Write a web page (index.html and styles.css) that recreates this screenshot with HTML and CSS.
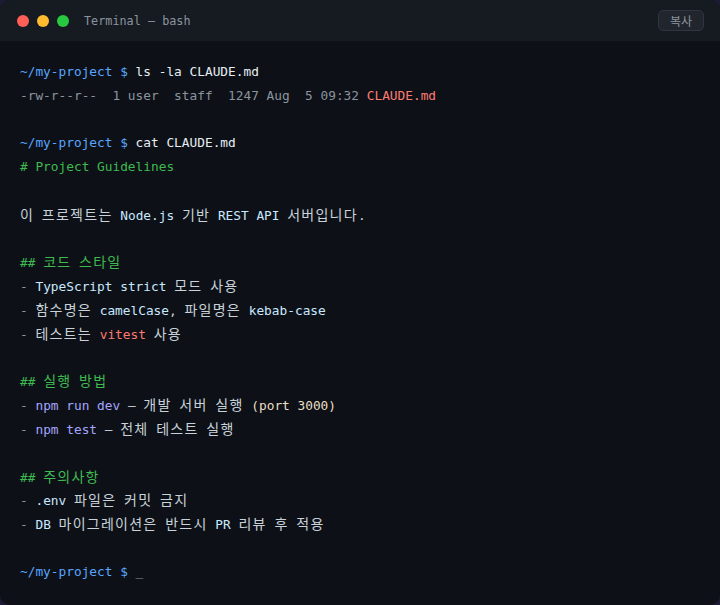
FILE: index.html
```html
<!DOCTYPE html>
<html lang="ko">
<head>
<meta charset="utf-8">
<title>Terminal</title>
<link rel="stylesheet" href="styles.css">
</head>
<body>
<div class="window">
  <div class="titlebar">
    <div class="dots">
      <span class="dot red"></span>
      <span class="dot yellow"></span>
      <span class="dot green"></span>
    </div>
    <div class="title">Terminal — bash</div>
    <button class="copy">복사</button>
  </div>
  <div class="term">
    <div class="line"><span class="prompt">~/my-project $</span> <span class="cmd">ls -la CLAUDE.md</span></div>
    <div class="line"><span class="muted">-rw-r--r--  1 user  staff  1247 Aug  5 09:32</span> <span class="red">CLAUDE.md</span></div>
    <div class="line"></div>
    <div class="line"><span class="prompt">~/my-project $</span> <span class="cmd">cat CLAUDE.md</span></div>
    <div class="line"><span class="green"># Project Guidelines</span></div>
    <div class="line"></div>
    <div class="line"><span class="k">이</span> <span class="k">프로젝트는</span> <span class="code">Node.js</span> <span class="k">기반</span> <span class="code">REST API</span> <span class="k">서버입니다</span>.</div>
    <div class="line"></div>
    <div class="line"><span class="green">## <span class="k">코드</span> <span class="k">스타일</span></span></div>
    <div class="line"><span class="dash">-</span> <span class="code">TypeScript strict</span> <span class="k">모드</span> <span class="k">사용</span></div>
    <div class="line"><span class="dash">-</span> <span class="k">함수명은</span> <span class="code">camelCase</span>, <span class="k">파일명은</span> <span class="code">kebab-case</span></div>
    <div class="line"><span class="dash">-</span> <span class="k">테스트는</span> <span class="red">vitest</span> <span class="k">사용</span></div>
    <div class="line"></div>
    <div class="line"><span class="green">## <span class="k">실행</span> <span class="k">방법</span></span></div>
    <div class="line"><span class="dash">-</span> <span class="npm">npm run dev</span> — <span class="k">개발</span> <span class="k">서버</span> <span class="k">실행</span> <span class="paren">(port 3000)</span></div>
    <div class="line"><span class="dash">-</span> <span class="npm">npm test</span> — <span class="k">전체</span> <span class="k">테스트</span> <span class="k">실행</span></div>
    <div class="line"></div>
    <div class="line"><span class="green">## <span class="k">주의사항</span></span></div>
    <div class="line"><span class="dash">-</span> <span class="code">.env</span> <span class="k">파일은</span> <span class="k">커밋</span> <span class="k">금지</span></div>
    <div class="line"><span class="dash">-</span> <span class="code">DB</span> <span class="k">마이그레이션은</span> <span class="k">반드시</span> <span class="code">PR</span> <span class="k">리뷰</span> <span class="k">후</span> <span class="k">적용</span></div>
    <div class="line"></div>
    <div class="line"><span class="prompt">~/my-project $</span> <span class="cursor">_</span></div>
  </div>
</div>
</body>
</html>
```

FILE: styles.css
```css
* { box-sizing: border-box; }
html, body {
  margin: 0;
  padding: 0;
  background: #1d1a36;
}
.window {
  width: 720px;
  height: 605px;
  border-radius: 10px;
  overflow: hidden;
  background: #0d1117;
  display: flex;
  flex-direction: column;
}
.titlebar {
  height: 42px;
  background: #161b22;
  border-bottom: 1px solid #0f1319;
  display: flex;
  align-items: center;
  padding: 0 16px 0 17px;
}
.dots {
  display: flex;
  gap: 8px;
}
.dot {
  width: 12px;
  height: 12px;
  border-radius: 50%;
  display: block;
}
.dot.red { background: #ff5f57; }
.dot.yellow { background: #febc2e; }
.dot.green { background: #28c840; }
.title {
  margin-left: 15px;
  font-family: "DejaVu Sans Mono", "Noto Sans CJK KR", monospace;
  font-size: 11.8px;
  color: #8b949e;
  flex: 1;
}
.copy {
  font-family: "Noto Sans CJK KR", sans-serif;
  font-size: 12px;
  color: #8b949e;
  background: #21262d;
  border: 1px solid #30363d;
  border-radius: 5px;
  height: 21px;
  padding: 0 11px;
  line-height: 19px;
  margin: 0;
}
.term {
  padding: 18px 20px;
  font-family: "DejaVu Sans Mono", "Noto Sans CJK KR", monospace;
  font-size: 12.8px;
  color: #c9d1d9;
}
.line {
  height: 23.8px;
  line-height: 23.8px;
  white-space: pre;
}
.k {
  font-family: "Noto Sans CJK KR", sans-serif;
  font-size: 14px;
  letter-spacing: 1.25px;
}
.prompt { color: #58a6ff; }
.cmd { color: #e6edf3; }
.muted { color: #8b949e; }
.red { color: #ff7b72; }
.green { color: #3fb950; }
.code { color: #cae8ff; }
.dash { color: #8b949e; }
.npm { color: #a5a5ff; }
.paren { color: #e9dfc4; }
.cursor { color: #8b949e; }
```
